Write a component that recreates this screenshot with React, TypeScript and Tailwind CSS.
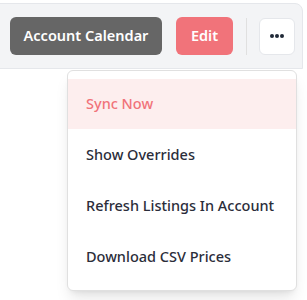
import React from "react";

export default function App() {
  const items = ["Show Overrides", "Refresh Listings In Account", "Download CSV Prices"];
  return (
    <div className="relative w-[307px] h-[300px] bg-white overflow-hidden" style={{ fontFamily: '"Noto Sans", "Open Sans", sans-serif' }}>
      <div className="mt-[3px] ml-[-10px] w-[313px] h-[66px] bg-[#f3f4f6] border border-[#e5e7eb] rounded-tr-lg flex items-center pl-[19px]">
        <button className="h-[38px] w-[152px] rounded-md bg-[#666666] text-white text-[14.5px] font-semibold">Account Calendar</button>
        <button className="ml-[14px] h-[38px] w-[57px] rounded-md bg-[#f1737a] text-white text-[14.5px] font-semibold">Edit</button>
        <div className="ml-[13px] w-px h-[37px] bg-[#e0e0e0]" />
        <button className="ml-[12px] h-[37px] w-[36px] rounded-md bg-white border border-[#e5e7eb] flex items-center justify-center gap-[1.5px]">
          <span className="w-[3.5px] h-[3.5px] rounded-full bg-[#1f2937]" />
          <span className="w-[3.5px] h-[3.5px] rounded-full bg-[#1f2937]" />
          <span className="w-[3.5px] h-[3.5px] rounded-full bg-[#1f2937]" />
        </button>
      </div>
      <div className="absolute left-[67px] top-[70px] w-[230px] bg-white border border-[#e0e0e0] rounded-md shadow-lg py-[8px]">
        <div className="h-[50px] bg-[#fdeeee] flex items-center pl-[18px] text-[14.5px] font-medium text-[#f1737a]">Sync Now</div>
        {items.map((t) => (
          <div key={t} className="h-[51px] flex items-center pl-[18px] text-[14.5px] font-medium text-[#2b2d3a]">{t}</div>
        ))}
      </div>
    </div>
  );
}
